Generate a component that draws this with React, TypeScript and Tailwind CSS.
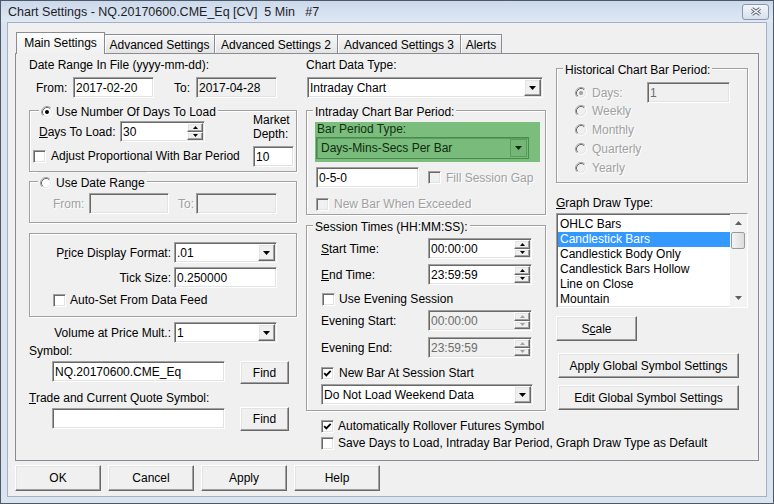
import React from "react";

const FONT = "font-['Liberation_Sans',Arial,sans-serif]";
const SUNKEN =
  "border border-t-[#a0a0a0] border-l-[#a0a0a0] border-r-white border-b-white shadow-[inset_1px_1px_0_#696969,inset_-1px_-1px_0_#e3e3e3]";
const RAISED =
  "border border-t-white border-l-white border-r-[#696969] border-b-[#696969] shadow-[inset_-1px_-1px_0_#a0a0a0,inset_1px_1px_0_#e3e3e3]";
const DIM = "text-[#a0a0a0] [text-shadow:1px_1px_0_#fff]";
const ETCHED = "border border-[#a0a0a0] shadow-[inset_1px_1px_0_#fff,1px_1px_0_#fff]";

function Radio({ checked = false, disabled = false }: { checked?: boolean; disabled?: boolean }) {
  return (
    <svg width="12" height="12" viewBox="0 0 12 12" className="block shrink-0">
      <circle cx="6" cy="6" r="5" fill={disabled ? "#f0f0f0" : "#fff"} />
      <path d="M2.11 9.89A5.5 5.5 0 0 1 9.89 2.11" fill="none" stroke="#a0a0a0" />
      <path d="M9.89 2.11A5.5 5.5 0 0 1 2.11 9.89" fill="none" stroke="#fff" />
      <path d="M2.82 9.18A4.5 4.5 0 0 1 9.18 2.82" fill="none" stroke="#696969" />
      <path d="M9.18 2.82A4.5 4.5 0 0 1 2.82 9.18" fill="none" stroke="#e3e3e3" />
      {checked && <circle cx="6" cy="6" r="2" fill={disabled ? "#a0a0a0" : "#000"} />}
    </svg>
  );
}

function Check({ checked = false, disabled = false }: { checked?: boolean; disabled?: boolean }) {
  return (
    <span className={`${SUNKEN} block h-[13px] w-[13px] shrink-0 ${disabled ? "bg-[#f0f0f0]" : "bg-white"}`}>
      {checked && (
        <svg width="11" height="11" viewBox="0 0 11 11" className="block">
          <path d="M2.2 5.2l2.1 2.1 4.4-4.4" fill="none" stroke="#000" strokeWidth="1.9" />
        </svg>
      )}
    </span>
  );
}

function Tri({ color = "#000" }: { color?: string }) {
  return (
    <svg width="7" height="4" viewBox="0 0 7 4" className="block">
      <path d="M0 0h7L3.5 4z" fill={color} />
    </svg>
  );
}

function Spin({ disabled = false }: { disabled?: boolean }) {
  const c = disabled ? "#a0a0a0" : "#000";
  return (
    <div className="flex w-[17px] flex-col py-px pr-px">
      <div className={`${RAISED} flex flex-1 items-center justify-center bg-[#f0f0f0]`}>
        <svg width="5" height="3" viewBox="0 0 5 3" className="block">
          <path d="M2.5 0L5 3H0z" fill={c} />
        </svg>
      </div>
      <div className={`${RAISED} flex flex-1 items-center justify-center bg-[#f0f0f0]`}>
        <svg width="5" height="3" viewBox="0 0 5 3" className="block">
          <path d="M0 0h5L2.5 3z" fill={c} />
        </svg>
      </div>
    </div>
  );
}

function Edit({
  value = "",
  className = "",
  disabled = false,
  readOnly = false,
  spin = false,
}: {
  value?: string;
  className?: string;
  disabled?: boolean;
  readOnly?: boolean;
  spin?: boolean;
}) {
  return (
    <div
      className={`${SUNKEN} flex h-[21px] shrink-0 items-stretch ${
        disabled || readOnly ? "bg-[#f0f0f0]" : "bg-white"
      } ${className}`}
    >
      <span className={`flex flex-1 items-center pl-[2px] ${disabled ? "text-[#6d6d6d]" : ""}`}>{value}</span>
      {spin && <Spin disabled={disabled} />}
    </div>
  );
}

function Combo({ value, className = "" }: { value: string; className?: string }) {
  return (
    <div className={`${SUNKEN} flex h-[21px] shrink-0 items-center bg-white ${className}`}>
      <span className="flex-1 whitespace-nowrap pl-[2px]">{value}</span>
      <div className={`${RAISED} mr-px flex h-[17px] w-[17px] items-center justify-center bg-[#f0f0f0]`}>
        <Tri />
      </div>
    </div>
  );
}

function Btn({ children, className = "" }: { children: React.ReactNode; className?: string }) {
  return (
    <div className={`${RAISED} flex shrink-0 items-center justify-center bg-[#f0f0f0] ${className}`}>{children}</div>
  );
}

function Group({
  legend,
  legendClass = "ml-[6px]",
  className = "",
  children,
}: {
  legend: React.ReactNode;
  legendClass?: string;
  className?: string;
  children: React.ReactNode;
}) {
  return (
    <fieldset className={`${ETCHED} ${className}`}>
      <legend className={`bg-[#f0f0f0] px-[2px] pt-[4px] leading-[14px] ${legendClass}`}>{legend}</legend>
      {children}
    </fieldset>
  );
}

function CheckRow({
  label,
  checked = false,
  disabled = false,
  className = "",
}: {
  label: React.ReactNode;
  checked?: boolean;
  disabled?: boolean;
  className?: string;
}) {
  return (
    <div className={`flex h-[14px] items-center gap-[4px] whitespace-nowrap ${className}`}>
      <Check checked={checked} disabled={disabled} />
      <span className={disabled ? DIM : ""}>{label}</span>
    </div>
  );
}

const TABS = [
  { name: "Main Settings", w: "w-[89px]" },
  { name: "Advanced Settings", w: "w-[110px]" },
  { name: "Advanced Settings 2", w: "w-[123px]" },
  { name: "Advanced Settings 3", w: "w-[123px]" },
  { name: "Alerts", w: "w-[41px]" },
];

const DRAW_TYPES = [
  "OHLC Bars",
  "Candlestick Bars",
  "Candlestick Body Only",
  "Candlestick Bars Hollow",
  "Line on Close",
  "Mountain",
];

function LeftColumn() {
  return (
    <div className="flex w-[268px] shrink-0 flex-col">
      <div className="mt-[4px]">Date Range In File (yyyy-mm-dd):</div>
      <div className="mt-[5px] flex items-center">
        <span className="ml-[7px] w-[37px]">From:</span>
        <Edit value="2017-02-20" className="w-[81px]" />
        <span className="ml-[20px] w-[22px]">To:</span>
        <Edit value="2017-04-28" readOnly className="w-[81px]" />
      </div>

      <Group
        className="mt-[3px] h-[71px]"
        legendClass="ml-[9px]"
        legend={
          <span className="flex items-center gap-[3px]">
            <Radio checked />
            Use Number Of Days To Load
          </span>
        }
      >
        <div className="flex">
          <div className="flex w-[223px] flex-col">
            <div className="mt-[2px] flex items-center">
              <span className="ml-[9px] w-[81px]">
                <u>D</u>ays To Load:
              </span>
              <Edit value="30" spin className="w-[85px]" />
            </div>
            <CheckRow className="mt-[7px] gap-[5px] pl-[3px]" label="Adjust Proportional With Bar Period" />
          </div>
          <div className="-mt-[6px] flex flex-col">
            <span>Market</span>
            <span>Depth:</span>
            <Edit value="10" className="mt-[5px] w-[41px]" />
          </div>
        </div>
      </Group>

      <Group
        className="h-[51px]"
        legendClass="ml-[8px]"
        legend={
          <span className="flex items-center gap-[4px]">
            <Radio />
            Use Date Range
          </span>
        }
      >
        <div className="mt-[3px] flex items-center">
          <span className={`ml-[23px] w-[36px] ${DIM}`}>From:</span>
          <Edit disabled className="w-[80px]" />
          <span className={`ml-[9px] w-[18px] ${DIM}`}>To:</span>
          <Edit disabled className="w-[81px]" />
        </div>
      </Group>

      <div className={`${ETCHED} mt-[10px] flex h-[84px] flex-col`}>
        <div className="mt-[8px] flex items-center">
          <span className="w-[144px] pr-[3px] text-right">
            P<u>r</u>ice Display Format:
          </span>
          <Combo value=".01" className="w-[103px]" />
        </div>
        <div className="mt-[4px] flex items-center">
          <span className="w-[144px] pr-[3px] text-right">Tick Size:</span>
          <Edit value="0.250000" className="w-[103px]" />
        </div>
        <CheckRow className="mt-[5px] pl-[23px]" label="Auto-Set From Data Feed" />
      </div>

      <div className="mt-[5px] flex items-center">
        <span className="w-[145px] pr-[3px] text-right">Volume at Price Mult.:</span>
        <Combo value="1" className="w-[103px]" />
      </div>
      <div className="mt-px">Symbol:</div>
      <div className="mt-[3px] flex items-start">
        <Edit value="NQ.20170600.CME_Eq" className="ml-[23px] w-[173px]" />
        <Btn className="ml-[15px] h-[23px] w-[49px]">Find</Btn>
      </div>
      <div className="mt-[7px]">
        <u>T</u>rade and Current Quote Symbol:
      </div>
      <div className="mt-[2px] flex items-start">
        <Edit className="ml-[23px] mt-px w-[173px]" />
        <Btn className="ml-[15px] h-[24px] w-[49px]">Find</Btn>
      </div>
    </div>
  );
}

function TimeRow({
  label,
  value,
  disabled = false,
  className = "",
}: {
  label: React.ReactNode;
  value: string;
  disabled?: boolean;
  className?: string;
}) {
  return (
    <div className={`flex items-center ${className}`}>
      <span className="ml-[14px] w-[107px]">{label}</span>
      <Edit value={value} spin disabled={disabled} className="w-[104px]" />
    </div>
  );
}

function MiddleColumn() {
  return (
    <div className="ml-[9px] flex w-[240px] shrink-0 flex-col">
      <div className="mt-[4px]">Chart Data Type:</div>
      <Combo value="Intraday Chart" className="ml-px mt-[5px] w-[236px]" />

      <Group className="mt-[3px] h-[114px]" legend="Intraday Chart Bar Period:">
        <div className="ml-[8px] mt-[3px] flex h-[40px] w-[225px] flex-col bg-[#7bbd7d]">
          <span className="pl-[2px] text-[#11300f]">Bar Period Type:</span>
          <div className="ml-px mt-px flex h-[22px] w-[213px] items-center border border-[#4b8a4e] bg-[#78bb7b] shadow-[inset_1px_1px_0_#5e9d61]">
            <span className="flex-1 pl-[4px] text-[#0d2a0d]">Days-Mins-Secs Per Bar</span>
            <div className="mr-px flex h-[18px] w-[17px] items-center justify-center border border-[#5b9b5e] bg-[#73b676]">
              <Tri color="#0d2a0d" />
            </div>
          </div>
        </div>
        <div className="mt-[5px] flex items-center">
          <Edit value="0-5-0" className="ml-[9px] w-[103px]" />
          <span className="ml-[9px]">
            <Check disabled />
          </span>
          <span className={`ml-[5px] ${DIM}`}>Fill Session Gap</span>
        </div>
        <CheckRow className="mt-[9px] gap-[5px] pl-[9px]" disabled label="New Bar When Exceeded" />
      </Group>

      <Group className="mt-px h-[195px]" legend="Session Times (HH:MM:SS):">
        <TimeRow
          className="mt-[4px]"
          value="00:00:00"
          label={
            <>
              <u>S</u>tart Time:
            </>
          }
        />
        <TimeRow
          className="mt-[5px]"
          value="23:59:59"
          label={
            <>
              <u>E</u>nd Time:
            </>
          }
        />
        <CheckRow className="mt-[7px] pl-[15px]" label="Use Evening Session" />
        <TimeRow className="mt-[4px]" value="00:00:00" disabled label="Evening Start:" />
        <TimeRow className="mt-[6px]" value="23:59:59" disabled label="Evening End:" />
        <CheckRow className="mt-[8px] gap-[5px] pl-[14px]" checked label="New Bar At Session Start" />
        <Combo value="Do Not Load Weekend Data" className="ml-[14px] mt-[4px] w-[212px]" />
      </Group>

      <CheckRow className="mt-[8px] pl-[15px]" checked label="Automatically Rollover Futures Symbol" />
      <CheckRow
        className="mt-[3px] pl-[15px]"
        label="Save Days to Load, Intraday Bar Period, Graph Draw Type as Default"
      />
    </div>
  );
}

function RightColumn() {
  return (
    <div className="ml-[10px] flex w-[192px] shrink-0 flex-col">
      <Group className="mt-[5px] h-[124px]" legend="Historical Chart Bar Period:">
        <div className="mt-[5px] flex items-center">
          <span className="ml-[18px]">
            <Radio checked disabled />
          </span>
          <span className={`ml-[5px] w-[55px] ${DIM}`}>Days:</span>
          <Edit value="1" disabled className="w-[83px]" />
        </div>
        <div className="-mt-[2px] flex flex-col">
          {["Weekly", "Monthly", "Quarterly", "Yearly"].map((p) => (
            <div key={p} className="flex h-[19px] items-center gap-[5px] pl-[18px]">
              <Radio disabled />
              <span className={DIM}>{p}</span>
            </div>
          ))}
        </div>
      </Group>

      <div className="mt-[13px]">
        <u>G</u>raph Draw Type:
      </div>
      <div className={`${SUNKEN} mt-[3px] flex h-[95px] bg-white`}>
        <div className="flex-1 pl-px pt-[3px]">
          {DRAW_TYPES.map((t, i) => (
            <div
              key={t}
              className={`h-[15px] whitespace-nowrap pl-[2px] leading-[15px] ${
                i === 1 ? "bg-[#3399ff] text-white" : ""
              }`}
            >
              {t}
            </div>
          ))}
        </div>
        <div className="flex w-[17px] flex-col bg-[#f3f3f3] py-px pr-px">
          <div className="flex h-[16px] items-center justify-center">
            <svg width="7" height="4" viewBox="0 0 7 4" className="block">
              <path d="M3.5 0L7 4H0z" fill="#606060" />
            </svg>
          </div>
          <div className="mx-px mt-px h-[17px] rounded-[2px] border border-[#9a9a9a] bg-gradient-to-r from-[#f4f4f4] to-[#dcdcdc]" />
          <div className="flex-1" />
          <div className="flex h-[16px] items-center justify-center">
            <svg width="7" height="4" viewBox="0 0 7 4" className="block">
              <path d="M0 0h7L3.5 4z" fill="#606060" />
            </svg>
          </div>
        </div>
      </div>

      <Btn className="mt-[8px] h-[25px] w-[81px]">
        <span>
          S<u>c</u>ale
        </span>
      </Btn>
      <Btn className="ml-[2px] mt-[12px] h-[25px] w-[181px]">Apply Global Symbol Settings</Btn>
      <Btn className="ml-[2px] mt-[7px] h-[25px] w-[181px]">Edit Global Symbol Settings</Btn>
    </div>
  );
}

export default function App() {
  return (
    <div
      className={`${FONT} flex h-[504px] w-[774px] flex-col border border-[#4f5866] bg-[#dae4f1] text-[12px] leading-[14px] text-black`}
    >
      <div className="flex h-[21px] shrink-0 items-center bg-gradient-to-b from-[#cbd9ec] to-[#dfe8f4] pl-[7px] pr-[4px]">
        <span className="whitespace-pre text-[12.5px] text-[#1e1e1e]">
          Chart Settings - NQ.20170600.CME_Eq [CV]  5 Min   #7
        </span>
        <div className="ml-auto flex h-[16px] w-[27px] items-center justify-center rounded-[3px] border border-[#8b97aa] bg-gradient-to-b from-[#f3f6fa] to-[#d6dfec]">
          <svg width="12" height="9" viewBox="0 0 12 9" className="block">
            <path d="M2 1.5L10 7.5M10 1.5L2 7.5" stroke="#555f6f" strokeWidth="3.2" />
            <path d="M2 1.5L10 7.5M10 1.5L2 7.5" stroke="#fff" strokeWidth="1.2" />
          </svg>
        </div>
      </div>

      <div className="mx-[6px] flex h-[475px] shrink-0 flex-col border border-[#a5b1c2] bg-[#f0f0f0]">
        <div className="ml-[8px] mt-[9px] flex h-[21px] items-end">
          {TABS.map((t, i) =>
            i === 0 ? (
              <div
                key={t.name}
                className={`relative z-10 -mb-px h-[22px] ${t.w} border border-b-0 border-[#898c95] bg-gradient-to-b from-[#fdfdfd] to-[#f0f0f0] pt-[3px] text-center`}
              >
                {t.name}
              </div>
            ) : (
              <div
                key={t.name}
                className={`h-[19px] ${t.w} whitespace-nowrap border-r border-t border-[#898c95] bg-gradient-to-b from-[#f7f7f7] to-[#e4e4e4] pt-[3px] text-center shadow-[inset_1px_1px_0_#fff]`}
              >
                {t.name}
              </div>
            )
          )}
        </div>

        <div className="ml-[7px] flex h-[408px] w-[744px] border border-[#898c95] bg-[#f0f0f0] pl-[13px]">
          <LeftColumn />
          <MiddleColumn />
          <RightColumn />
        </div>

        <div className="ml-[7px] mt-[4px] flex gap-[7px]">
          {["OK", "Cancel", "Apply", "Help"].map((b) => (
            <Btn key={b} className="h-[26px] w-[86px]">
              {b}
            </Btn>
          ))}
        </div>
      </div>
    </div>
  );
}
